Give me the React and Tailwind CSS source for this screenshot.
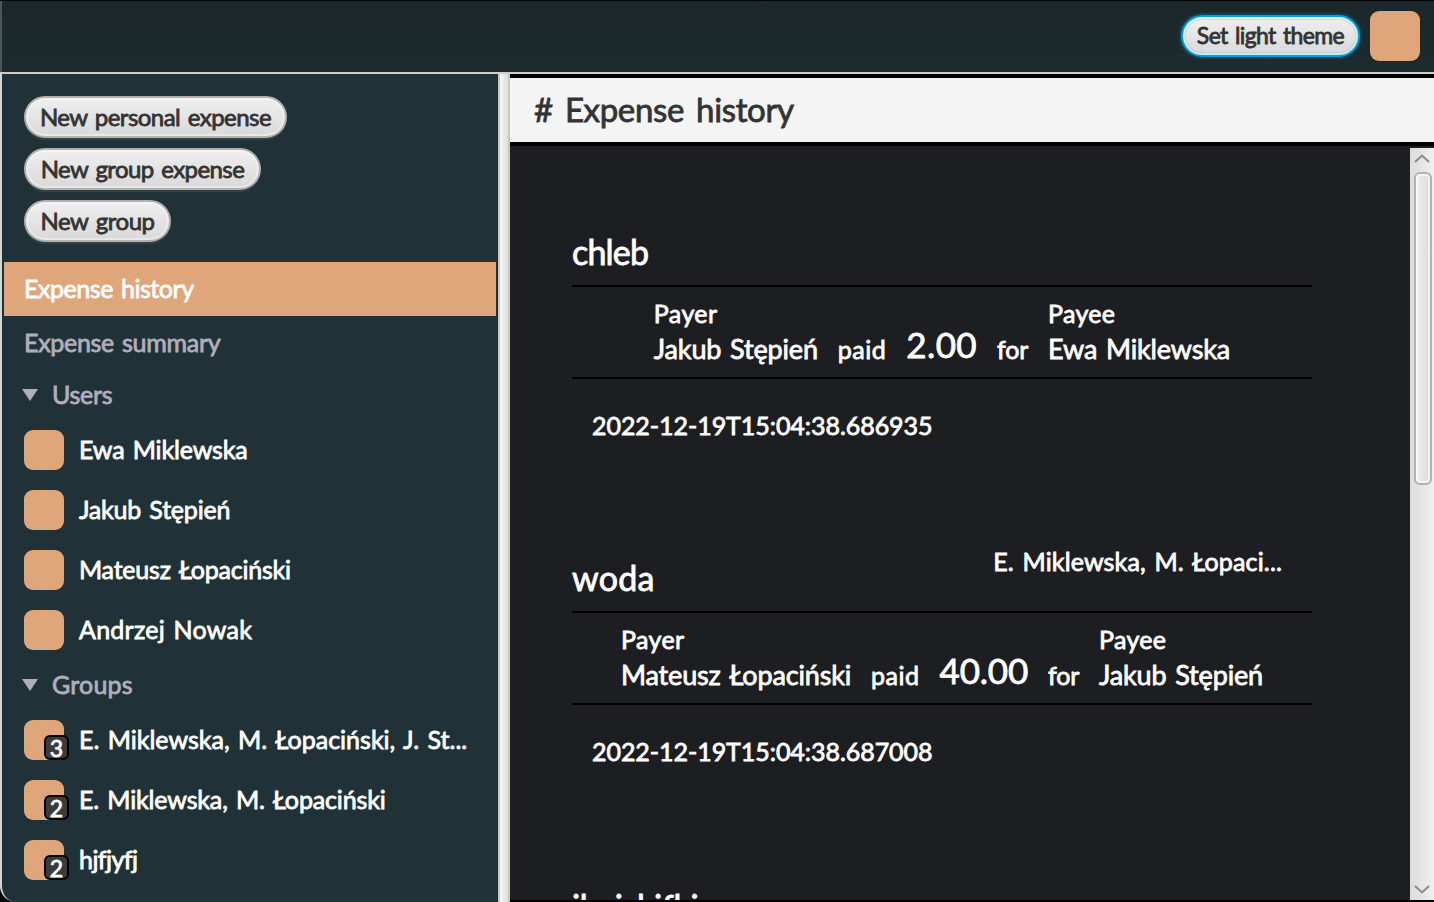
const users = [
  { name: 'Ewa Miklewska', tracking: 'tracking-[-0.15px]' },
  { name: 'Jakub Stępień', tracking: 'tracking-[-0.2px]' },
  { name: 'Mateusz Łopaciński', tracking: 'tracking-[-0.22px]' },
  { name: 'Andrzej Nowak', tracking: 'tracking-[0.25px]' },
];

const groups = [
  { name: 'E. Miklewska, M. Łopaciński, J. St...', count: 3, tracking: 'tracking-normal' },
  { name: 'E. Miklewska, M. Łopaciński', count: 2, tracking: 'tracking-[-0.15px]' },
  { name: 'hjfjyfj', count: 2, tracking: 'tracking-[-0.55px]' },
];

const expenses = [
  {
    title: 'chleb',
    titleClass: 'pb-4 tracking-[-0.8px]',
    payer: 'Jakub Stępień',
    amount: '2.00',
    amountTracking: 'tracking-[0.4px]',
    payee: 'Ewa Miklewska',
    date: '2022-12-19T15:04:38.686935',
  },
  {
    title: 'woda',
    titleClass: 'pb-4 tracking-[0.2px]',
    group: 'E. Miklewska, M. Łopaci...',
    payer: 'Mateusz Łopaciński',
    amount: '40.00',
    amountTracking: 'tracking-[-0.2px]',
    payee: 'Jakub Stępień',
    date: '2022-12-19T15:04:38.687008',
  },
  { title: 'ikojskifkj', titleClass: 'pb-[13px] tracking-[-0.3px]' },
];

function PillButton({ className, children }) {
  return (
    <button
      className={`h-[42px] rounded-full border-2 border-[#b1b1b1] bg-linear-to-b from-[#efefef] to-[#d9d9d9] text-center text-[24px] leading-none whitespace-nowrap text-[#333333] shadow-[inset_0_0_0_2px_rgba(255,255,255,0.4),0_2px_0_rgba(255,255,255,0.08)] [word-spacing:2px] ${className}`}
    >
      {children}
    </button>
  );
}

function Avatar({ count }) {
  return (
    <div className="relative size-10 shrink-0 rounded-[9px] bg-[#dfa57b]">
      {count && (
        <span className="absolute top-[15px] left-5 flex size-[25px] items-center justify-center rounded-[6px] border-2 border-black bg-[#3b3b3b] pt-px text-[23px] leading-none text-white">
          {count}
        </span>
      )}
    </div>
  );
}

function SectionHeader({ label, className }) {
  return (
    <div className={`flex h-[50px] items-center text-[#b1aebb] ${className}`}>
      <svg width="16" height="12" viewBox="0 0 16 12" className="ml-[18px]">
        <path d="M0 0H16L8 12Z" fill="currentColor" />
      </svg>
      <span className="ml-[14px] pb-[2px]">{label}</span>
    </div>
  );
}

function Member({ name, count, tracking }) {
  return (
    <div className="flex h-[60px] items-center gap-[15px] pl-5 text-white">
      <Avatar count={count} />
      <span className={`pb-[2px] whitespace-nowrap ${tracking}`}>{name}</span>
    </div>
  );
}

function Party({ label, name, tracking }) {
  return (
    <div className="flex flex-col leading-[36px]">
      <span className={tracking}>{label}</span>
      <span className="text-[27px] tracking-[-0.15px] whitespace-nowrap">{name}</span>
    </div>
  );
}

function Expense({ title, titleClass, group, payer, amount, amountTracking, payee, date }) {
  return (
    <article className="h-[326px] shrink-0">
      <div className="flex h-[99px] justify-between">
        <h2 className={`self-end text-[34px] leading-[34px] ${titleClass}`}>{title}</h2>
        {group && <span className="pt-[36px] pr-[30px] leading-[26px] tracking-[0.15px]">{group}</span>}
      </div>
      {payer && (
        <div className="flex h-[94px] items-end justify-center gap-5 border-y-2 border-black pb-[10px] leading-[36px]">
          <Party label="Payer" name={payer} tracking="tracking-[0.4px]" />
          <span className="tracking-[0.5px]">paid</span>
          <span className={`pb-[5.5px] text-[35px] ${amountTracking}`}>{amount}</span>
          <span className="tracking-[-0.2px]">for</span>
          <Party label="Payee" name={payee} tracking="tracking-[0.3px]" />
        </div>
      )}
      {date && <p className="pt-[28px] pl-5 leading-[36px] tracking-[-0.05px]">{date}</p>}
    </article>
  );
}

function Chevron({ d }) {
  return (
    <svg width="16" height="9" viewBox="0 0 16 9" fill="none" stroke="#8a8a8a" strokeWidth="2">
      <path d={d} />
    </svg>
  );
}

export default function App() {
  return (
    <div className="flex h-[902px] w-[1434px] flex-col overflow-hidden bg-black font-['Lato',sans-serif] text-[25px] leading-none [-webkit-text-stroke:0.8px_currentColor] [word-spacing:2px]">
      <header className="mt-px flex h-[71px] shrink-0 items-center justify-end gap-[10px] border-l-2 border-[#4a5658] bg-linear-to-b from-[#1b272a] to-[#1e2b2e] pr-[14px] pb-[2px]">
        <button className="h-[42px] w-[179px] rounded-full border-2 border-[#069fd5] bg-linear-to-b from-[#efefef] to-[#d9d9d9] text-center text-[23px] leading-none tracking-[-0.62px] whitespace-nowrap text-[#333333] shadow-[0_0_3px_1px_rgba(6,159,213,0.45),inset_0_0_0_2px_rgba(255,255,255,0.4),inset_0_0_0_3px_rgba(6,159,213,0.15)] [word-spacing:2px]">
          Set light theme
        </button>
        <div className="size-[50px] rounded-[9px] bg-[#dfa57b]" />
      </header>
      <div className="h-[2px] shrink-0 bg-[#cdcfcb]" />

      <div className="flex min-h-0 flex-1">
        <aside className="flex w-[498px] shrink-0 flex-col overflow-hidden rounded-bl-[16px] border-l-2 border-[#d4d6d2] bg-[#203237] px-[2px]">
          <div className="flex flex-col items-start gap-[10px] pt-[22px] pl-5">
            <PillButton className="w-[263px] tracking-[-0.54px]">New personal expense</PillButton>
            <PillButton className="w-[237px] tracking-[-0.58px]">New group expense</PillButton>
            <PillButton className="w-[147px] tracking-[-0.45px]">New group</PillButton>
          </div>
          <nav className="mt-5 flex flex-col">
            <div className="flex h-[54px] items-center bg-[#dfa57b] pb-px pl-5 tracking-[-0.45px] text-white">Expense history</div>
            <div className="flex h-[54px] items-center pb-px pl-5 tracking-[-0.3px] text-[#b1aebb]">Expense summary</div>
            <SectionHeader label="Users" className="tracking-[-0.3px]" />
            {users.map((u) => (
              <Member key={u.name} {...u} />
            ))}
            <SectionHeader label="Groups" className="tracking-[0.2px]" />
            {groups.map((g) => (
              <Member key={g.name} {...g} />
            ))}
          </nav>
        </aside>

        <div className="w-3 shrink-0 border-x-2 border-[#c8c8c8] bg-linear-to-r from-[#fafafa] to-[#dddddd]" />

        <main className="flex min-w-0 flex-1 flex-col pb-[2px]">
          <div className="flex h-[72px] shrink-0 items-center border-y-4 border-black bg-[#f4f4f4] pb-[2px] pl-[24px] text-[33px] tracking-[-0.35px] text-[#333333]">
            <h1 className="[word-spacing:4px]"># Expense history</h1>
          </div>
          <div className="flex min-h-0 flex-1 bg-[#1d1e22]">
            <section className="flex min-w-0 flex-1 flex-col overflow-hidden pt-10 pr-[98px] pl-[62px] text-white">
              {expenses.map((e) => (
                <Expense key={e.title} {...e} />
              ))}
            </section>
            <div className="mt-[2px] flex w-6 shrink-0 flex-col items-center bg-linear-to-r from-[#dcdcdc] to-[#efefef] pt-[6px] pb-[6px]">
              <Chevron d="M1 8L8 1.5L15 8" />
              <div className="mt-[9px] ml-[2px] h-[313px] w-[18px] rounded-[6px] border-2 border-[#b1b1b1] bg-linear-to-r from-[#f0f0f0] to-[#dadada] shadow-[inset_0_0_0_2px_rgba(255,255,255,0.6)]" />
              <div className="mt-auto flex">
                <Chevron d="M1 1L8 7.5L15 1" />
              </div>
            </div>
          </div>
        </main>
      </div>
    </div>
  );
}
